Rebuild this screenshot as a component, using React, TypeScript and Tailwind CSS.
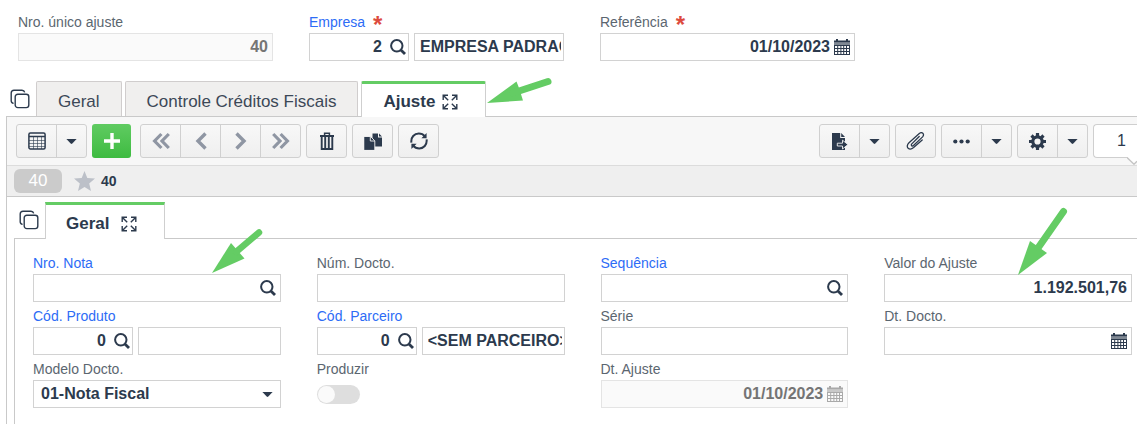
import React, { useId, useState } from 'react';
import type { ReactNode } from 'react';

function SearchIcon() {
  return (
    <svg className="size-4" viewBox="0 0 16 16" fill="none" stroke="currentColor" aria-hidden="true">
      <ellipse cx="6.8" cy="6.8" rx="5.7" ry="5.8" strokeWidth="2" />
      <path d="M10.9 11 L15 15" strokeWidth="2.8" />
    </svg>
  );
}

function CalendarIcon() {
  return (
    <svg className="size-4" viewBox="0 0 16 16" fill="currentColor" aria-hidden="true">
      <path d="M0 1.5H2V0H4V1.5H12V0H14V1.5H16V3.5H0Z" />
      <path d="M0 3.5H16V6H0Z" opacity="0.6" />
      <path
        fillRule="evenodd"
        d="M0 6H16V16H0Z M1 7V9H3.2V7Z M4.2 7V9H6.4V7Z M7.4 7V9H9.2V7Z M10.2 7V9H12V7Z M13 7V9H15V7Z M1 10V12H3.2V10Z M4.2 10V12H6.4V10Z M7.4 10V12H9.2V10Z M10.2 10V12H12V10Z M13 10V12H15V10Z M1 13V15H3.2V13Z M4.2 13V15H6.4V13Z M7.4 13V15H9.2V13Z M10.2 13V15H12V13Z M13 13V15H15V13Z"
      />
    </svg>
  );
}

function StackIcon() {
  return (
    <svg className="size-5" viewBox="0 0 20 20" fill="none" stroke="currentColor" strokeWidth="1.4" aria-hidden="true">
      <rect x="5.2" y="5.2" width="13.6" height="13.4" rx="2.6" />
      <path d="M3.6 14.4C2 14.2 1.2 13.2 1.2 11.8V4C1.2 2.2 2.2 1.2 4 1.2H12C13.5 1.2 14.4 2 14.7 3.3" />
    </svg>
  );
}

function ExpandIcon() {
  return (
    <svg className="size-4" viewBox="0 0 16 16" fill="none" stroke="currentColor" strokeWidth="1.4" aria-hidden="true">
      <path d="M6 1.2H1.2V6 M1.2 1.2L6.2 6.2 M10 1.2H14.8V6 M14.8 1.2L9.8 6.2 M6 14.8H1.2V10 M1.2 14.8L6.2 9.8 M10 14.8H14.8V10 M14.8 14.8L9.8 9.8" />
    </svg>
  );
}

function GridIcon() {
  return (
    <svg className="h-[18px] w-[18px]" viewBox="0 0 18 18" fill="none" stroke="currentColor" aria-hidden="true">
      <rect x="0.9" y="1.1" width="16.2" height="15.8" rx="1.5" strokeWidth="1.5" />
      <path d="M1 4.5H17" strokeWidth="1.6" />
      <path d="M1 8.5H17M1 11.5H17M1 14.5H17M5.5 5V17M9.5 5V17M13.5 5V17" strokeWidth="0.6" />
    </svg>
  );
}

function Caret() {
  return (
    <svg className="h-[5px] w-[11px]" viewBox="0 0 11 5" fill="currentColor" aria-hidden="true">
      <path d="M0.4 0H10.6L6.3 4.6Q5.5 5.2 4.7 4.6Z" />
    </svg>
  );
}

function Chevrons({ left = false, double = false }: { left?: boolean; double?: boolean }) {
  return (
    <svg
      className={`h-[18px] w-[18px] text-[#8f96a3] ${left ? 'rotate-180' : ''}`}
      viewBox="0 0 18 18"
      fill="none"
      stroke="currentColor"
      strokeWidth="3.2"
      aria-hidden="true"
    >
      {double ? <path d="M1.2 2L8 9L1.2 16M8.6 2L15.4 9L8.6 16" /> : <path d="M4.5 1.5L12 9L4.5 16.5" strokeWidth="3.4" />}
    </svg>
  );
}

function PlusIcon() {
  return (
    <svg className="h-[18px] w-[18px]" viewBox="0 0 18 18" stroke="currentColor" strokeWidth="3.4" aria-hidden="true">
      <path d="M9 1V17M1 9H17" />
    </svg>
  );
}

function TrashIcon() {
  return (
    <svg className="h-[18px] w-[14px]" viewBox="0 0 14 18" fill="none" stroke="currentColor" aria-hidden="true">
      <path d="M0 4H14" strokeWidth="2" />
      <path d="M4.6 3.5V1.2H9.4V3.5" strokeWidth="1.5" />
      <path d="M1.7 4V17H12.3V4M5.2 5V17M8.8 5V17" strokeWidth="1.9" />
    </svg>
  );
}

function DuplicateIcon() {
  return (
    <svg className="h-[17px] w-[18px]" viewBox="0 0 18 17" aria-hidden="true">
      <path fill="currentColor" d="M8.5 0.5H14V4.5H18V13.5H8.5Z M15 0.5L18 3.6H15Z" />
      <path fill="currentColor" stroke="#f4f4f4" strokeWidth="0.9" d="M-0.2 3.5H6.5L10.8 7.8V17.4H-0.2Z" />
      <path fill="none" stroke="#f4f4f4" strokeWidth="0.9" d="M6.3 3.5V8H10.8" />
    </svg>
  );
}

function RefreshIcon() {
  return (
    <svg className="h-[18px] w-[18px]" viewBox="0 0 18 18" aria-hidden="true">
      <path d="M1.4 10.6C0.7 5 4.4 1.6 8.8 1.6C11.4 1.6 13.4 2.6 14.8 4.4M16.6 7.4C17.3 13 13.6 16.4 9.2 16.4C6.6 16.4 4.6 15.4 3.2 13.6" fill="none" stroke="currentColor" strokeWidth="2" />
      <path d="M16.6 1V6.2H11.4Z M1.4 17V11.8H6.6Z" fill="currentColor" />
    </svg>
  );
}

function ExportIcon() {
  return (
    <svg className="h-[17px] w-[16px]" viewBox="0 0 16 17" aria-hidden="true">
      <path fill="currentColor" d="M0 0H8.2V5H13V17H0Z M9.2 0L13 4.1H9.2Z" />
      <path fill="currentColor" stroke="#f4f4f4" strokeWidth="0.9" d="M5.3 10.2H10.5V7.2L16 11.6L10.5 16V13H5.3Z" />
    </svg>
  );
}

function ClipIcon() {
  return (
    <svg className="h-[18px] w-[20px]" viewBox="0 0 20 18" fill="none" stroke="currentColor" strokeWidth="1.3" strokeLinecap="round" aria-hidden="true">
      <path d="M13.2 4.5L5.8 11.9C4.6 13.3 6.1 14.7 7.5 13.5L16.6 4.9C19.2 2 15.8 -0.8 13 1.7L3 10.8C-1.4 15.2 3.5 19.1 7.6 15.6L16.2 7.9" />
    </svg>
  );
}

function DotsIcon() {
  return (
    <svg className="h-[5px] w-[17px]" viewBox="0 0 17 5" fill="currentColor" aria-hidden="true">
      <circle cx="2.3" cy="2.5" r="2.1" />
      <circle cx="8.5" cy="2.5" r="2.1" />
      <circle cx="14.7" cy="2.5" r="2.1" />
    </svg>
  );
}

function GearIcon() {
  return (
    <svg className="h-[17px] w-[17px]" viewBox="0 0 17 17" fill="none" stroke="currentColor" aria-hidden="true">
      <circle cx="8.5" cy="8.5" r="4.7" strokeWidth="3.2" />
      <path
        strokeWidth="3.2"
        d="M8.5 0V3M8.5 14V17M0 8.5H3M14 8.5H17M2.5 2.5L4.6 4.6M12.4 12.4L14.5 14.5M2.5 14.5L4.6 12.4M12.4 4.6L14.5 2.5"
      />
    </svg>
  );
}

function StarIcon() {
  return (
    <svg className="h-5 w-[21px] text-[#bcc0c8]" viewBox="0 0 21 20" fill="currentColor" aria-hidden="true">
      <path d="M10.5 0L13.3 6.9L21 7.5L15.2 12.4L17 20L10.5 16L4 20L5.8 12.4L0 7.5L7.7 6.9Z" />
    </svg>
  );
}

type FieldProps = {
  label: string;
  lookup?: boolean;
  required?: boolean;
  children: (id: string) => ReactNode;
};

function Field({ label, lookup, required, children }: FieldProps) {
  const id = useId();
  return (
    <div className="min-w-0">
      <label
        htmlFor={id}
        className={`flex h-[25px] items-center gap-2 pt-[3px] text-[14px] leading-5 ${lookup ? 'text-[#2d6cf6]' : 'text-[#5b6670]'}`}
      >
        {label}
        {required && <span className="h-5 text-[24px] leading-[26px] font-bold text-[#dd4b3e]">*</span>}
      </label>
      <div className="flex gap-[5px]">{children(id)}</div>
    </div>
  );
}

type BoxProps = {
  id?: string;
  name?: string;
  value?: string;
  icon?: 'search' | 'calendar';
  align?: 'left' | 'right';
  narrow?: boolean;
  disabled?: boolean;
};

function Box({ id, name, value = '', icon, align = 'right', narrow, disabled }: BoxProps) {
  const [text, setText] = useState(value);
  return (
    <div
      className={`flex h-7 min-w-0 items-center border pl-[5px] ${narrow ? 'w-[100px] shrink-0' : 'flex-1'} ${
        narrow || align === 'left' ? 'pr-[2px]' : 'pr-1'
      } ${icon === 'calendar' ? 'gap-1' : 'gap-2'} ${
        disabled ? 'border-[#e4e4e4] bg-[#fafafa] text-[#757575]' : 'border-[#d2d2d2] bg-white text-[#2c3a4d]'
      }`}
    >
      <input
        id={id}
        aria-label={name}
        value={text}
        disabled={disabled}
        onChange={(e) => setText(e.target.value)}
        className={`h-full w-0 min-w-0 flex-1 bg-transparent text-[16px] font-bold outline-none ${align === 'right' ? 'text-right' : 'text-left'}`}
      />
      {icon && (
        <button type="button" disabled={disabled} aria-label={icon === 'search' ? 'Pesquisar' : 'Abrir calendário'} className={`shrink-0 ${disabled ? 'opacity-60' : ''}`}>
          {icon === 'search' ? <SearchIcon /> : <CalendarIcon />}
        </button>
      )}
    </div>
  );
}

function ToolGroup({ children }: { children: ReactNode }) {
  return (
    <div className="flex h-[34px] shrink-0 divide-x divide-[#d0d0d0] overflow-hidden rounded-[3px] border border-[#d0d0d0] bg-linear-to-b from-[#f8f8f8] to-[#efefef]">
      {children}
    </div>
  );
}

function Tool({ label, small, children }: { label: string; small?: boolean; children: ReactNode }) {
  return (
    <button type="button" aria-label={label} className={`flex items-center justify-center ${small ? 'w-[29px]' : 'w-10 last:w-[39px]'}`}>
      {children}
    </button>
  );
}

function Header() {
  return (
    <header className="grid grid-cols-[255fr_255fr_255fr_246fr] gap-x-9 pt-2 pl-[18px]">
      <Field label="Nro. único ajuste">{(id) => <Box id={id} value="40" disabled />}</Field>
      <Field label="Empresa" lookup required>
        {(id) => (
          <>
            <Box id={id} value="2" icon="search" narrow />
            <Box name="Nome da empresa" value="EMPRESA PADRAO" align="left" />
          </>
        )}
      </Field>
      <Field label="Referência" required>{(id) => <Box id={id} value="01/10/2023" icon="calendar" />}</Field>
    </header>
  );
}

function Toolbar() {
  return (
    <div className="flex h-12 items-start gap-[5px] bg-[#f7f7f7] pt-[7px] pl-[9px]">
      <ToolGroup>
        <Tool label="Grade"><GridIcon /></Tool>
        <Tool label="Opções da grade" small><Caret /></Tool>
      </ToolGroup>
      <button type="button" aria-label="Adicionar" className="mr-1 flex h-[34px] w-[39px] shrink-0 items-center justify-center rounded-[3px] bg-linear-to-b from-[#5fcb61] to-[#3dbb40] text-white">
        <PlusIcon />
      </button>
      <ToolGroup>
        <Tool label="Primeiro"><Chevrons left double /></Tool>
        <Tool label="Anterior"><Chevrons left /></Tool>
        <Tool label="Próximo"><Chevrons /></Tool>
        <Tool label="Último"><Chevrons double /></Tool>
      </ToolGroup>
      <ToolGroup><Tool label="Excluir"><TrashIcon /></Tool></ToolGroup>
      <ToolGroup><Tool label="Duplicar"><DuplicateIcon /></Tool></ToolGroup>
      <ToolGroup><Tool label="Atualizar"><RefreshIcon /></Tool></ToolGroup>
      <div className="ml-auto flex gap-[5px]">
        <ToolGroup>
          <Tool label="Exportar"><ExportIcon /></Tool>
          <Tool label="Opções de exportação" small><Caret /></Tool>
        </ToolGroup>
        <ToolGroup><Tool label="Anexos"><ClipIcon /></Tool></ToolGroup>
        <ToolGroup>
          <Tool label="Mais ações"><DotsIcon /></Tool>
          <Tool label="Lista de ações" small><Caret /></Tool>
        </ToolGroup>
        <ToolGroup>
          <Tool label="Configurações"><GearIcon /></Tool>
          <Tool label="Opções de configuração" small><Caret /></Tool>
        </ToolGroup>
        <div className="relative h-[34px] w-11 rounded-l-[4px] border border-r-0 border-[#cfcfcf] bg-white pl-[23px] text-[16px] leading-8 text-[#2c3a4d]">
          1
          <svg className="absolute top-8 right-0 h-2 w-[10px]" viewBox="0 0 10 8" aria-hidden="true">
            <path d="M0 0L7 7L10 4V0Z" fill="#fff" />
            <path d="M0 0.5L7 7.2L10 4.2" fill="none" stroke="#c4c4c4" strokeWidth="1.4" />
          </svg>
        </div>
      </div>
    </div>
  );
}

function DetailForm() {
  return (
    <form className="grid grid-cols-4 gap-x-9 pt-[10px] pr-[5px] pb-4 pl-[18px]">
      <Field label="Nro. Nota" lookup>{(id) => <Box id={id} icon="search" />}</Field>
      <Field label="Núm. Docto.">{(id) => <Box id={id} />}</Field>
      <Field label="Sequência" lookup>{(id) => <Box id={id} icon="search" />}</Field>
      <Field label="Valor do Ajuste">{(id) => <Box id={id} value="1.192.501,76" />}</Field>
      <Field label="Cód. Produto" lookup>
        {(id) => (
          <>
            <Box id={id} value="0" icon="search" narrow />
            <Box name="Descrição do produto" align="left" />
          </>
        )}
      </Field>
      <Field label="Cód. Parceiro" lookup>
        {(id) => (
          <>
            <Box id={id} value="0" icon="search" narrow />
            <Box name="Nome do parceiro" value="<SEM PARCEIRO>" align="left" />
          </>
        )}
      </Field>
      <Field label="Série">{(id) => <Box id={id} align="left" />}</Field>
      <Field label="Dt. Docto.">{(id) => <Box id={id} icon="calendar" />}</Field>
      <Field label="Modelo Docto.">
        {(id) => (
          <div className="relative flex flex-1 items-center text-[#2c3a4d]">
            <select id={id} className="h-7 w-full appearance-none border border-[#d2d2d2] bg-white pr-6 pl-[7px] text-[16px] font-bold outline-none">
              <option>01-Nota Fiscal</option>
            </select>
            <span className="pointer-events-none absolute right-2"><Caret /></span>
          </div>
        )}
      </Field>
      <Field label="Produzir">
        {(id) => (
          <input
            id={id}
            type="checkbox"
            role="switch"
            className="mt-[5px] h-[19px] w-[43px] appearance-none rounded-full bg-[#dedede] p-px before:block before:size-[17px] before:rounded-full before:bg-[#fafafa] checked:bg-[#64cc64] checked:before:ml-6"
          />
        )}
      </Field>
      <Field label="Dt. Ajuste">{(id) => <Box id={id} value="01/10/2023" icon="calendar" disabled />}</Field>
    </form>
  );
}

function Callout({ className, children }: { className: string; children: ReactNode }) {
  return (
    <svg className={`pointer-events-none absolute overflow-visible text-[#64cc64] ${className}`} fill="currentColor" stroke="currentColor" aria-hidden="true">
      {children}
    </svg>
  );
}

export default function App() {
  return (
    <main className="relative min-h-screen overflow-hidden bg-white font-['Liberation_Sans',Arial,sans-serif] text-[#2c3a4d]">
      <Header />

      <nav className="mt-5 flex h-[35px] items-stretch pl-[10px] text-[17px]" aria-label="Abas">
        <button type="button" aria-label="Todas as abas" className="mr-[6px] self-center"><StackIcon /></button>
        <div className="flex items-stretch gap-[3px]" role="tablist">
          <button type="button" role="tab" aria-selected="false" className="rounded-t-[2px] border border-b-0 border-[#d0cdcd] bg-[#f0efee] px-[21px] pt-[5px] text-[#3c4857]">Geral</button>
          <button type="button" role="tab" aria-selected="false" className="rounded-t-[2px] border border-b-0 border-[#d0cdcd] bg-[#f0efee] px-[21px] pt-[5px] text-[#3c4857]">Controle Créditos Fiscais</button>
          <button type="button" role="tab" aria-selected="true" className="-mb-px flex items-center gap-[7px] rounded-t-[2px] border-x border-t-[3px] border-x-[#cfcfcf] border-t-[#64cc64] bg-white pt-[2px] pr-[27px] pl-[21px] font-bold">
            Ajuste
            <ExpandIcon />
          </button>
        </div>
      </nav>

      <section className="ml-[6px] border-t border-l border-[#c9c9c9]">
        <Toolbar />
        <div className="flex h-8 items-center border-y border-t-[#dcdcdc] border-b-[#c9c9c9] bg-[#efefef] pl-[7px]">
          <span className="flex h-6 w-12 items-center justify-center rounded-[6px] bg-[#cbcbcb] text-[17px] text-white">40</span>
          <span className="ml-3"><StarIcon /></span>
          <strong className="ml-[6px] text-[14px]">40</strong>
        </div>

        <nav className="mt-[5px] flex h-9 items-stretch pl-3 text-[17px]" aria-label="Abas do ajuste">
          <button type="button" aria-label="Todas as abas do ajuste" className="mr-[6px] self-center"><StackIcon /></button>
          <button type="button" role="tab" aria-selected="true" className="-mb-px flex items-center gap-3 border-x border-t-[3px] border-x-[#cfcfcf] border-t-[#64cc64] bg-white pt-[3px] pr-[27px] pl-5 font-bold">
            Geral
            <ExpandIcon />
          </button>
        </nav>
        <div className="ml-[7px] border-t border-l border-[#c9c9c9]">
          <DetailForm />
        </div>
      </section>

      <Callout className="top-[77px] left-[487px] h-[26px] w-[65px]">
        <path d="M0 26L29.5 4.5L32 11L36 23.5Z" stroke="none" />
        <path d="M26 16L61 4.5" strokeWidth="7" strokeLinecap="round" />
      </Callout>
      <Callout className="top-[229px] left-[212px] h-[44px] w-[51px]">
        <path d="M0 44L19 14L32.5 29.5Z" stroke="none" />
        <path d="M24 23L47 3.5" strokeWidth="6.5" strokeLinecap="round" />
      </Callout>
      <Callout className="top-[208px] left-[1018px] h-[67px] w-[50px]">
        <path d="M0 67L12 33L29 45Z" stroke="none" />
        <path d="M20 40L45.5 3.5" strokeWidth="7" strokeLinecap="round" />
      </Callout>
    </main>
  );
}
